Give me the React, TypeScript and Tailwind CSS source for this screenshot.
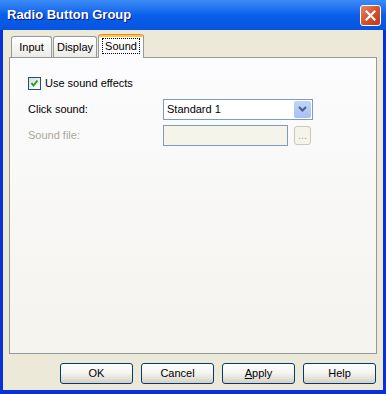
import { JSX } from "react";

/* ---------------- PIECES ---------------- */

function Tab({ label, width, active }: { label: string; width: string; active?: boolean }): JSX.Element {
  if (active) {
    return (
      <div className={`relative z-10 -mb-px flex h-[24px] flex-col rounded-t-[3px] border-x border-[#919b9c] bg-[#fcfcfe] ${width}`}>
        <div className="h-[3px] rounded-t-[3px] border-t border-[#e68b2c] bg-[#ffc83c]" />
        <div className="flex flex-1 items-start justify-center pt-[1px]">
          <span className="border border-dotted border-black px-[2px] leading-[14px]">{label}</span>
        </div>
      </div>
    );
  }
  return (
    <div className={`mt-[3px] flex h-[21px] items-start justify-center rounded-t-[3px] border-x border-t border-[#919b9c] bg-gradient-to-b from-[#fefefe] to-[#ecebe6] pt-[3px] leading-[14px] ${width}`}>
      {label}
    </div>
  );
}

function XpButton({ children }: { children: React.ReactNode }): JSX.Element {
  return (
    <button className="flex h-[21px] w-[73px] items-center justify-center rounded-[3px] border border-[#003c74] bg-gradient-to-b from-[#ffffff] via-[#f3f3ef] to-[#d6d0c5] text-black">
      {children}
    </button>
  );
}

/* ---------------- APP ---------------- */

export default function App(): JSX.Element {
  return (
    <div
      className="flex h-[394px] w-[386px] flex-col overflow-hidden bg-[#0831d9] text-[11px] text-black"
      style={{ fontFamily: '"Liberation Sans", Arial, sans-serif' }}
    >
      {/* TITLE BAR */}
      <div className="flex h-[30px] shrink-0 items-center justify-between bg-gradient-to-b from-[#3c8cf7] via-[#0a5fe9] to-[#0654e0] pl-[7px] pr-[5px]">
        <span className="text-[13px] font-bold text-white [text-shadow:1px_1px_0_#0a1883]">
          Radio Button Group
        </span>
        <div className="flex h-[21px] w-[21px] items-center justify-center rounded-[3px] border border-white bg-gradient-to-br from-[#e8866a] via-[#d6512d] to-[#c0391b]">
          <svg width="11" height="11" viewBox="0 0 11 11">
            <path d="M1.5 1.5 L9.5 9.5 M9.5 1.5 L1.5 9.5" stroke="white" strokeWidth="2.2" strokeLinecap="square" />
          </svg>
        </div>
      </div>

      {/* BODY */}
      <div className="mx-[3px] mb-[4px] flex flex-1 flex-col bg-[#ece9d8] px-[6px] pt-[3px]">
        {/* TABS */}
        <div className="flex items-end gap-[1px] pl-[2px]">
          <Tab label="Input" width="w-[41px]" />
          <Tab label="Display" width="w-[44px]" />
          <Tab label="Sound" width="w-[46px]" active />
        </div>

        {/* PANEL */}
        <div className="h-[297px] border border-[#919b9c] bg-gradient-to-b from-[#fcfcfe] to-[#f4f3ee] px-[18px] pt-[17px]">
          <label className="flex items-center gap-[4px]">
            <span className="flex h-[13px] w-[13px] items-center justify-center border border-[#1c5180] bg-gradient-to-br from-[#dcdcd7] to-white">
              <svg width="9" height="9" viewBox="0 0 9 9">
                <path d="M1.5 4 L3.5 6.5 L7.5 1.5" stroke="#21a121" strokeWidth="2" fill="none" />
              </svg>
            </span>
            Use sound effects
          </label>

          <div className="mt-[7px] flex items-center">
            <span className="w-[135px]">Click sound:</span>
            <div className="flex h-[21px] w-[150px] items-center border border-[#7f9db9] bg-white pl-[3px]">
              <span className="flex-1">Standard 1</span>
              <span className="m-[1px] flex h-[17px] w-[17px] items-center justify-center rounded-[2px] bg-gradient-to-b from-[#c1d3fb] to-[#a9c0f5]">
                <svg width="9" height="6" viewBox="0 0 9 6">
                  <path d="M1 1 L4.5 4.5 L8 1" stroke="#4d6185" strokeWidth="2" fill="none" />
                </svg>
              </span>
            </div>
          </div>

          <div className="mt-[5px] flex items-center">
            <span className="w-[135px] text-[#aca899]">Sound file:</span>
            <div className="h-[21px] w-[125px] border border-[#7f9db9] bg-[#f5f4ea]" />
            <div className="ml-[6px] flex h-[19px] w-[17px] items-center justify-center rounded-[3px] border border-[#c9c7ba] bg-[#f5f4ea] leading-none text-[#aca899]">
              ...
            </div>
          </div>
        </div>

        {/* BUTTONS */}
        <div className="mt-[9px] flex justify-end gap-[8px] pr-[1px]">
          <XpButton>OK</XpButton>
          <XpButton>Cancel</XpButton>
          <XpButton>
            <span><u>A</u>pply</span>
          </XpButton>
          <XpButton>Help</XpButton>
        </div>
      </div>
    </div>
  );
}
